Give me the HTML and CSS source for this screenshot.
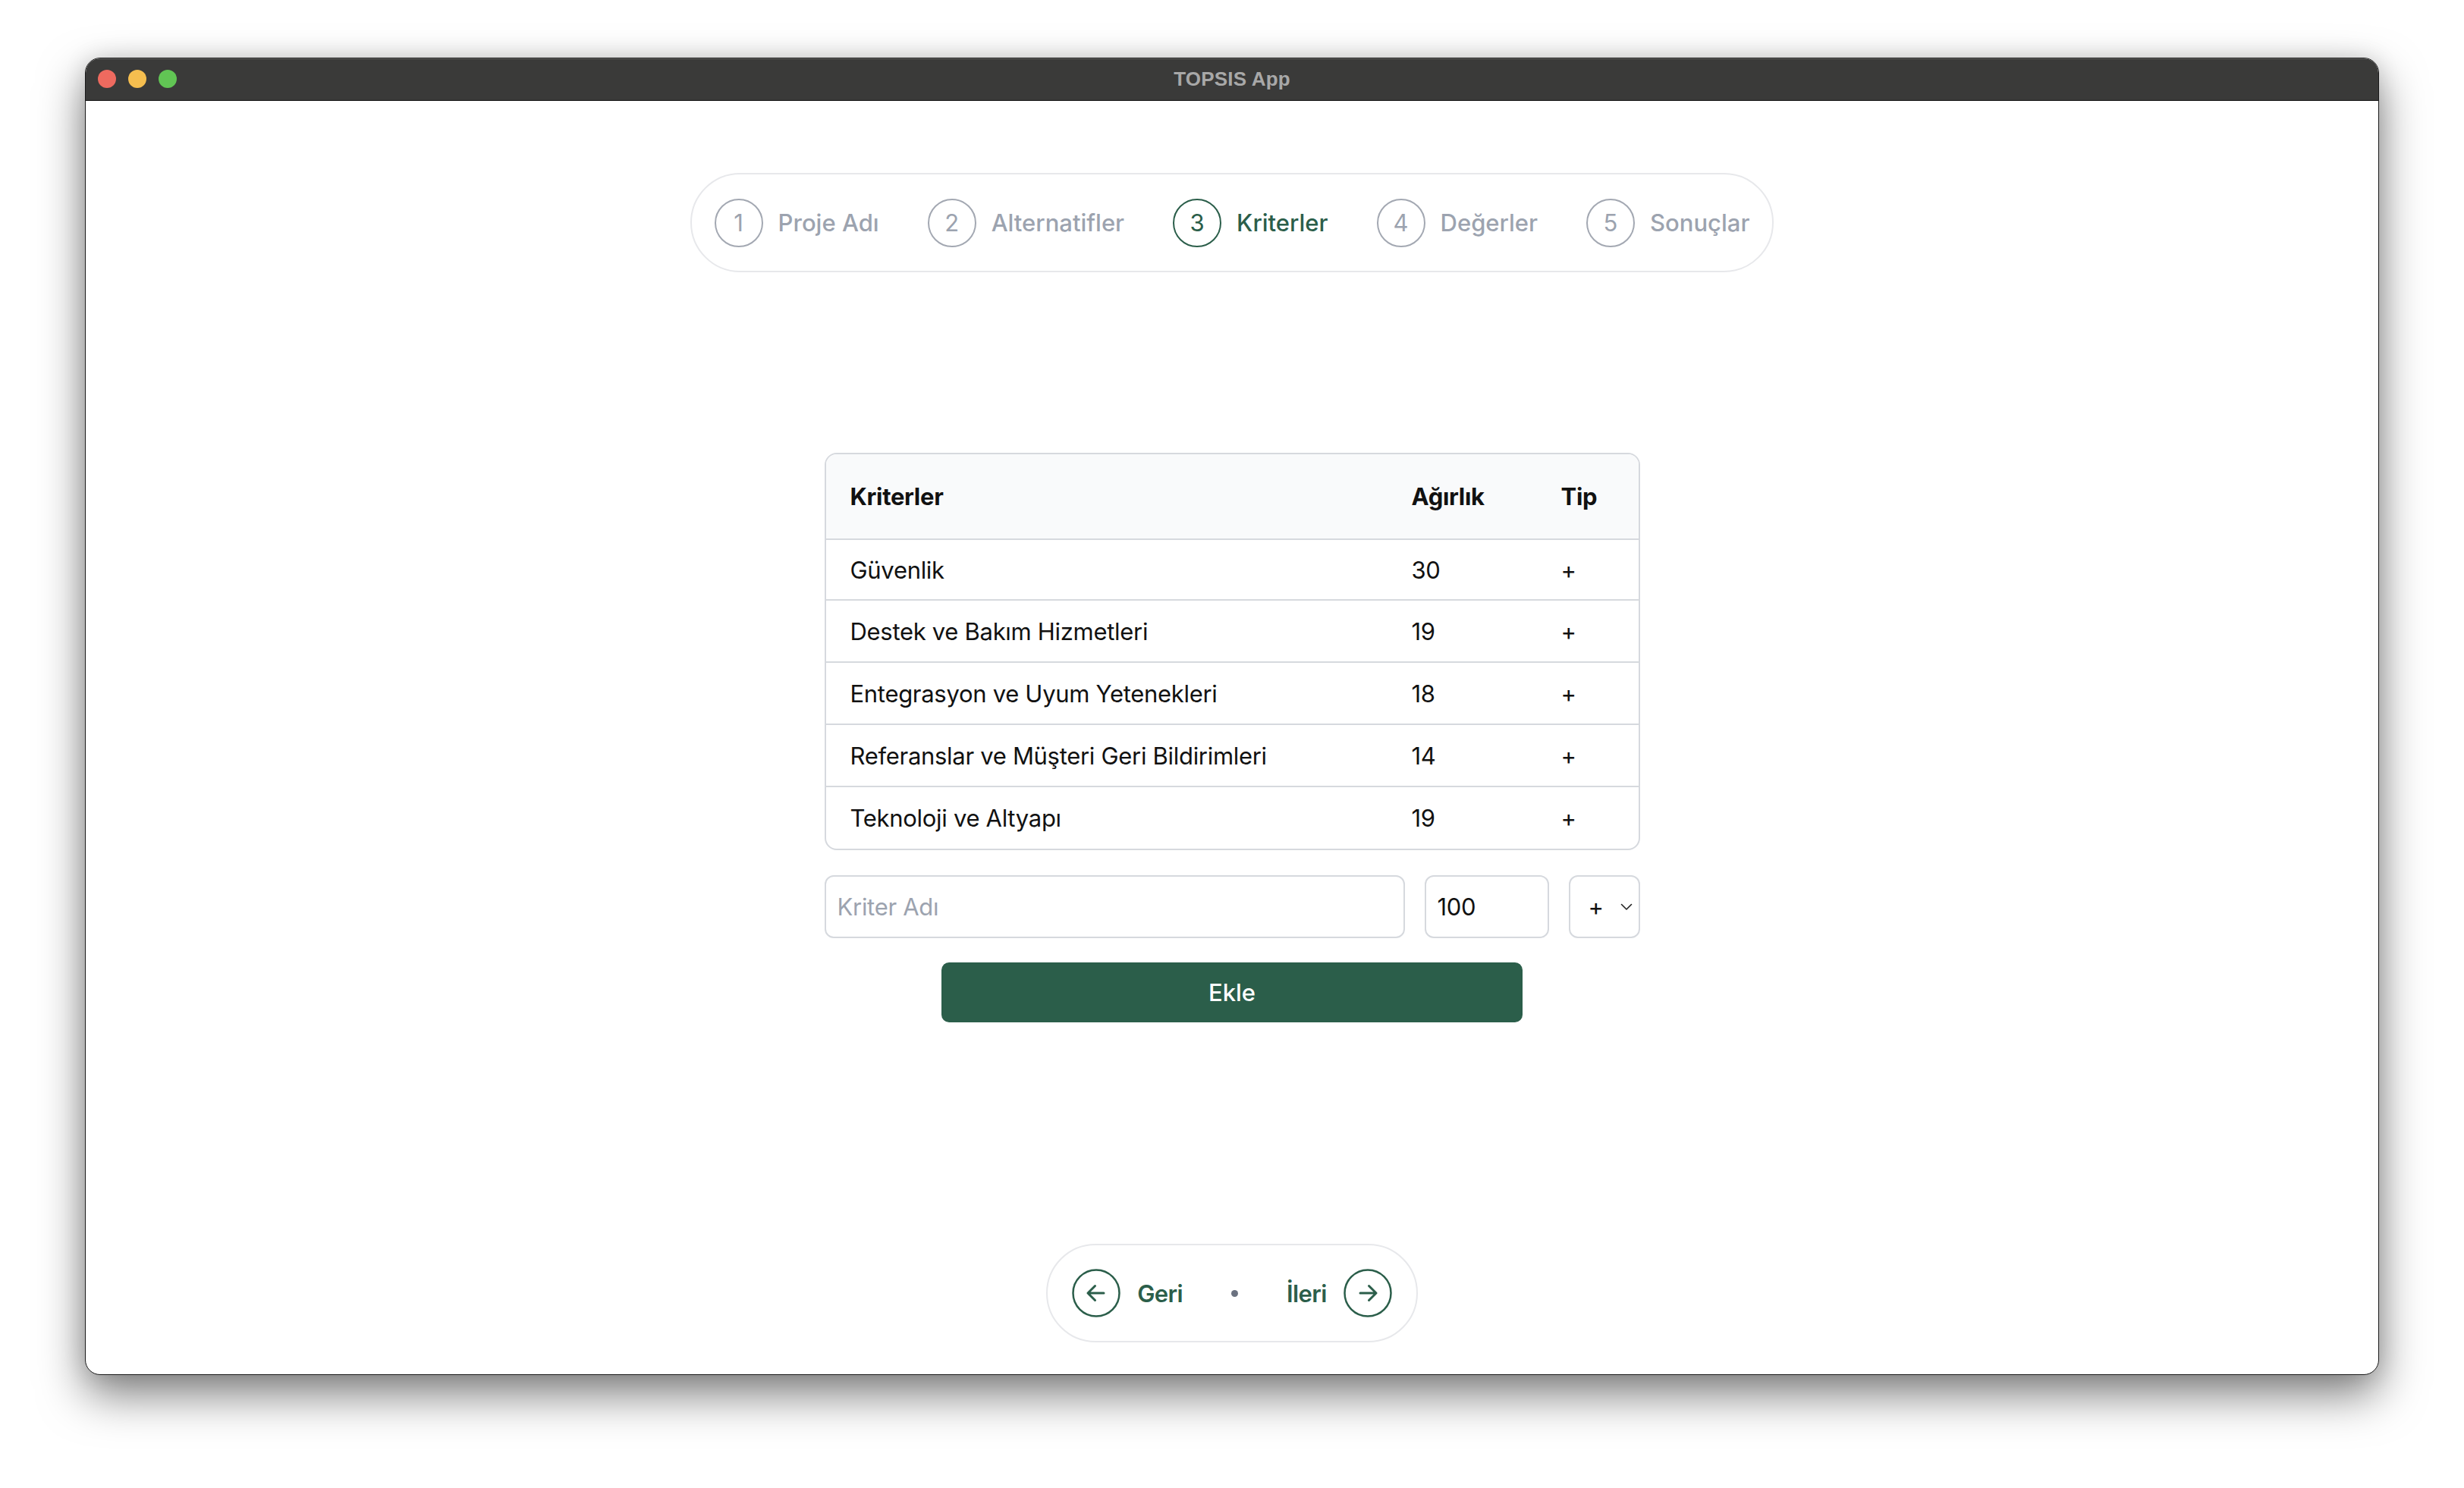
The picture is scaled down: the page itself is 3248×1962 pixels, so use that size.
FILE: index.html
```html
<!DOCTYPE html>
<html lang="tr">
<head>
<meta charset="utf-8">
<title>TOPSIS App</title>
<link rel="stylesheet" href="styles.css">
</head>
<body>
<div class="window">
  <header class="titlebar">
    <div class="lights">
      <span class="light red"></span>
      <span class="light yellow"></span>
      <span class="light green"></span>
    </div>
    <div class="title">TOPSIS App</div>
  </header>
  <main class="content">
    <nav class="stepper">
      <div class="step"><span class="step-num">1</span><span class="step-label">Proje Adı</span></div>
      <div class="step"><span class="step-num">2</span><span class="step-label">Alternatifler</span></div>
      <div class="step active"><span class="step-num">3</span><span class="step-label">Kriterler</span></div>
      <div class="step"><span class="step-num">4</span><span class="step-label">Değerler</span></div>
      <div class="step"><span class="step-num">5</span><span class="step-label">Sonuçlar</span></div>
    </nav>

    <section class="form">
      <div class="table-wrap">
        <table class="criteria">
          <colgroup><col><col class="c-weight"><col class="c-type"></colgroup>
          <thead>
            <tr><th>Kriterler</th><th>Ağırlık</th><th>Tip</th></tr>
          </thead>
          <tbody>
            <tr><td>Güvenlik</td><td>30</td><td>+</td></tr>
            <tr><td>Destek ve Bakım Hizmetleri</td><td>19</td><td>+</td></tr>
            <tr><td>Entegrasyon ve Uyum Yetenekleri</td><td>18</td><td>+</td></tr>
            <tr><td>Referanslar ve Müşteri Geri Bildirimleri</td><td>14</td><td>+</td></tr>
            <tr><td>Teknoloji ve Altyapı</td><td>19</td><td>+</td></tr>
          </tbody>
        </table>
      </div>
      <div class="inputs">
        <input class="field name" type="text" placeholder="Kriter Adı">
        <input class="field weight" type="text" value="100">
        <div class="field select">
          <span class="select-val">+</span>
          <svg class="chev" width="16" height="10" viewBox="0 0 16 10"><path d="M1.5 1.5 8 8l6.5-6.5" fill="none" stroke="#222" stroke-width="1.6" stroke-linecap="round" stroke-linejoin="round"/></svg>
        </div>
      </div>
      <button class="add" type="button">Ekle</button>
    </section>

    <div class="pager">
      <span class="nav-btn">
        <svg width="64" height="64" viewBox="0 0 64 64"><circle cx="32" cy="32" r="30.5" fill="none" stroke="#2b5e4a" stroke-width="2.5"/><path d="M42 32H21m0 0 9.5-9.5M21 32l9.5 9.5" fill="none" stroke="#2b5e4a" stroke-width="3" stroke-linecap="round" stroke-linejoin="round"/></svg>
        <span class="nav-label">Geri</span>
      </span>
      <span class="dot"></span>
      <span class="nav-btn">
        <span class="nav-label">İleri</span>
        <svg width="64" height="64" viewBox="0 0 64 64"><circle cx="32" cy="32" r="30.5" fill="none" stroke="#2b5e4a" stroke-width="2.5"/><path d="M22 32h21m0 0-9.5-9.5M43 32l-9.5 9.5" fill="none" stroke="#2b5e4a" stroke-width="3" stroke-linecap="round" stroke-linejoin="round"/></svg>
      </span>
    </div>
  </main>
</div>
</body>
</html>
```

FILE: styles.css
```css
* { box-sizing: border-box; }

html, body {
  margin: 0;
  padding: 0;
  background: #ffffff;
}

body {
  width: 3248px;
  height: 1962px;
  overflow: hidden;
  font-family: Inter, "Noto Sans", sans-serif;
}

.window {
  margin: 76px 112px 0;
  width: 3024px;
  height: 1737px;
  border-radius: 20px;
  background: #ffffff;
  border: 1px solid #1a1a1a;
  box-shadow: 0 26px 60px rgba(0, 0, 0, 0.5), 0 0 30px rgba(0, 0, 0, 0.12);
  overflow: hidden;
  display: flex;
  flex-direction: column;
}

.titlebar {
  height: 56px;
  flex: none;
  background: #3a3a39;
  border-bottom: 1px solid #111;
  box-shadow: inset 0 1px 0 rgba(255, 255, 255, 0.22);
  display: flex;
  align-items: center;
  justify-content: center;
  position: relative;
}

.lights {
  position: absolute;
  left: 16px;
  top: 15px;
  display: flex;
  gap: 16px;
}

.light {
  width: 24px;
  height: 24px;
  border-radius: 50%;
  display: block;
}
.light.red { background: #ee6a5f; }
.light.yellow { background: #f5be4f; }
.light.green { background: #61c554; }

.title {
  font-family: "Liberation Sans", Arial, sans-serif;
  font-weight: 700;
  font-size: 26px;
  color: #a8a8a8;
  letter-spacing: 0.2px;
}

.content {
  flex: 1;
  display: flex;
  flex-direction: column;
  align-items: center;
}

/* stepper */
.stepper {
  margin-top: 95px;
  height: 131px;
  border: 2px solid #e7e8eb;
  border-radius: 999px;
  padding: 0 30px;
  display: flex;
  align-items: center;
  gap: 64px;
}

.step {
  display: flex;
  align-items: center;
  gap: 20px;
  color: #9ca3af;
}

.step-num {
  width: 64px;
  height: 64px;
  border: 2px solid #a3a8b2;
  border-radius: 50%;
  display: flex;
  align-items: center;
  justify-content: center;
  font-size: 31px;
  font-weight: 400;
}

.step-label {
  font-size: 31px;
  font-weight: 500;
}

.step.active { color: #2b5e4a; }
.step.active .step-num { border-color: #2b5e4a; }

/* form */
.form {
  margin-top: 238px;
  width: 1075px;
  display: flex;
  flex-direction: column;
  align-items: center;
}

.table-wrap {
  width: 100%;
  border: 2px solid #d6d9de;
  border-radius: 16px;
  overflow: hidden;
}

.criteria {
  width: 100%;
  border-collapse: collapse;
  table-layout: fixed;
  font-size: 31px;
  letter-spacing: -0.3px;
  color: #111;
}

.c-weight { width: 197px; }
.c-type { width: 134px; }

.criteria th {
  height: 112px;
  padding: 0 32px;
  text-align: left;
  font-weight: 700;
  background: #f9fafb;
  border-bottom: 2px solid #d6d9de;
}

.criteria td {
  height: 82px;
  padding: 0 32px;
  text-align: left;
  font-weight: 400;
  border-top: 2px solid #d6d9de;
}

.criteria tbody tr:first-child td { border-top: none; height: 80px; }

.inputs {
  margin-top: 33px;
  width: 100%;
  display: flex;
  gap: 26px;
}

.field {
  height: 83px;
  border: 2px solid #d6d9de;
  border-radius: 12px;
  font-family: inherit;
  font-size: 31px;
  letter-spacing: -0.3px;
  color: #111;
  padding: 0 15px;
  background: #fff;
  outline: none;
}

.field::placeholder { color: #9ca3af; }

.field.name { flex: 1; min-width: 0; }
.field.weight { width: 164px; flex: none; }
.field.select {
  width: 94px;
  flex: none;
  display: flex;
  align-items: center;
  justify-content: space-between;
  padding: 0 8px 0 24px;
}

.select-val { font-size: 31px; }
.chev { width: 16px; height: 10px; }

.add {
  margin-top: 32px;
  width: 766px;
  height: 79px;
  border: none;
  border-radius: 10px;
  background: #2b5e4a;
  color: #fff;
  font-family: inherit;
  font-size: 31px;
  font-weight: 500;
}

/* pager */
.pager {
  margin-top: auto;
  margin-bottom: 42px;
  height: 130px;
  border: 2px solid #e7e8eb;
  border-radius: 999px;
  padding: 0 32px;
  display: flex;
  align-items: center;
  gap: 64px;
}

.nav-btn {
  display: flex;
  align-items: center;
  gap: 22px;
  color: #2b5e4a;
}

.nav-btn svg { display: block; }

.nav-label {
  font-size: 31px;
  font-weight: 600;
  letter-spacing: -0.6px;
}

.dot {
  width: 9px;
  height: 9px;
  border-radius: 50%;
  background: #6b7280;
}
```
